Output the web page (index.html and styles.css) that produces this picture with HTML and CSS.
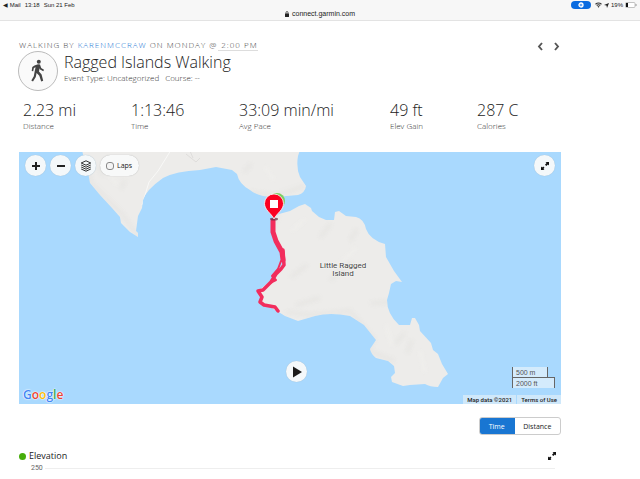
FILE: index.html
```html
<!DOCTYPE html>
<html lang="en">
<head>
<meta charset="utf-8">
<title>Ragged Islands Walking</title>
<link rel="stylesheet" href="styles.css">
</head>
<body>
<header class="browser">
  <div class="status">
    <div class="status-side"><span>◀ Mail</span><span>13:18</span><span>Sun 21 Feb</span></div>
    <div class="status-side">
      <span class="record"><svg width="6" height="6" viewBox="0 0 6 6"><circle cx="3" cy="3" r="2" fill="#64a5f5" stroke="#fff" stroke-width="1.3"/></svg></span>
      <svg class="wifi" width="7" height="6" viewBox="0 0 14 11"><path d="M1 4Q7-1 13 4M3.5 6.5Q7 3.5 10.5 6.5" fill="none" stroke="#333" stroke-width="2.2"/><path d="M5 8.3Q7 6.8 9 8.3L7 10.8Z" fill="#333"/></svg>
      <svg width="5" height="5" viewBox="0 0 10 10"><path d="M10 0 6 10 5 5 0 4Z" fill="#222"/></svg>
      <span>19%</span>
      <svg width="12" height="6" viewBox="0 0 12 6"><rect x=".5" y=".5" width="9.5" height="5" rx="1" fill="#fff" stroke="#aaa" stroke-width=".7"/><path d="M1 1h2v4H1Z" fill="#111"/><path d="M11 2v2" stroke="#999"/></svg>
    </div>
  </div>
  <div class="address">
    <svg width="4" height="6" viewBox="0 0 4 6"><path d="M1 3V1.5a1 1 0 0 1 2 0V3" fill="none" stroke="#222" stroke-width=".7"/><rect y="2.5" width="4" height="3.5" rx=".5" fill="#222"/></svg>
    <span>connect.garmin.com</span>
  </div>
</header>

<main class="page">
  <section class="heading">
    <div class="byline">WALKING BY <a href="#">KARENMCCRAW</a> ON MONDAY @<a class="when" href="#">2:00 PM</a></div>
    <nav class="pager">
      <button type="button" aria-label="Previous"><svg width="7" height="9" viewBox="0 0 7 9"><path d="M5 1 2 4.5 5 8" fill="none" stroke="#555" stroke-width="1.9"/></svg></button>
      <button type="button" aria-label="Next"><svg width="7" height="9" viewBox="0 0 7 9"><path d="M2 1 5 4.500 2 8" fill="none" stroke="#555" stroke-width="1.9"/></svg></button>
    </nav>
  </section>

  <section class="activity">
    <div class="badge">
      <svg width="16" height="24" viewBox="0 0 16 24"><circle cx="8.800" cy="2.700" r="2" fill="#444"/><path d="M4.500 6.500 8 5.200 10 5.500 11.200 9 14 10.800 13.300 12.200 10.100 10.500 9.600 9.300 9 12.500 11.600 15.500 13.200 21.700 11.200 22.500 9.300 16.800 6.600 14 5.800 18 3 22.500 1.300 21.400 3.800 17.300 4.700 12.200 5.600 8.200 3.900 9 3.200 12.200 1.700 12 2.300 8Z" fill="#444"/></svg>
    </div>
    <div>
      <h1>Ragged Islands Walking</h1>
      <p class="meta"><span>Event Type: Uncategorized</span><span>Course: --</span></p>
    </div>
  </section>

  <dl class="stats">
    <div><dd>2.23 mi</dd><dt>Distance</dt></div>
    <div><dd>1:13:46</dd><dt>Time</dt></div>
    <div><dd>33:09 min/mi</dd><dt>Avg Pace</dt></div>
    <div><dd>49 ft</dd><dt>Elev Gain</dt></div>
    <div><dd>287 C</dd><dt>Calories</dt></div>
  </dl>

  <section class="map">
    <svg class="terrain" viewBox="19 152 542 252" preserveAspectRatio="xMidYMid slice" aria-hidden="true">
      <defs>
        <filter id="soft" x="-20%" y="-20%" width="140%" height="140%"><feGaussianBlur stdDeviation="2"/></filter>
        <clipPath id="land"><path d="M82 150 85 163 88 172 90 183 100 195 112 208 120 217 121 223 130 232 138 237 138 233 136 231 138 216 142 208 143 200Q146 190 163 178 176 171 200 170L216 167 232 170 237 174Q239 184 250 190 258 197 275 197L298 195Q305 193 306 186L300 177Q296 168 298 156L300 150Z"/><path d="M273 219 279 214 290 211 299 206 305 204 311 208 312 211 319 217 326 220 334 220 335 212 339 211 346 216 356 217Q364 219 366 229 370 240 385 244L386 257 394 271 402 282 396 281 391 284 389 293 387 300Q387 314 399 325L410 325 412 318 415 318 419 325 420 331 431 343 433 350 438 354 442 364 448 374 443 378 438 387Q430 387 425 384L410 385 403 386 392 382 391 377 395 373 394 366 388 361 376 358Q371 354 370 349L376 340 364 325 350 316Q330 312 315 316L298 321 285 316 277 311 262 303 258 291 270 281 283 264 280 248 272 236Z"/></clipPath>
      </defs>
      <path fill="#a9d9fe" d="M0 100H640V450H0Z"/>
      <g clip-path="url(#land)">
        <path fill="#edecea" d="M0 100H640V450H0Z"/>
        <g filter="url(#soft)" fill="none" stroke="#d9d8d4" stroke-width="3" opacity=".35">
          <path d="M84 163 92 184 122 214 139 238M98 166 104 176M125 180 121 189M250 192 275 196 305 186M278 215 265 240M286 312 310 315 350 311 374 339 368 350 394 361M331 224 320 237M291 277 307 265M357 229 350 241M330 280 352 263M296 305 320 298M405 333 395 344M407 353 412 340M244 172 251 164M392 302 371 303"/>
          <path stroke="#f7f6f3" d="M102 162 117 185M265 166 274 181M291 231 306 219M357 248 339 264M386 324 392 346M420 350 425 373"/>
        </g>
        <path d="M171 150 158 171 149 182 142 205" fill="none" stroke="#f8f8f7"/>
        <path d="M186 154 196 162 200 158M190 151 193 158" fill="none" stroke="#dedddb"/>
      </g>
      <g fill="none" stroke="#f22d5d" stroke-linecap="round" stroke-linejoin="round">
        <path stroke-width="5" d="M273 221 273 232 276 241 282 252 283 260"/>
        <path stroke-width="3.500" d="M283 250 284 265 281 269 276 274 271 282 263 290 258 291 262 297 260 302 264 305 275 307 278 311"/>
        <path stroke-width="2" d="M281 261 278 269 272 276 276 280 270 283"/>
      </g>
      <circle cx="277" cy="201" r="8" fill="#7fcf62"/>
      <ellipse cx="274" cy="219" rx="4" ry="1.500" fill="#67283f" opacity=".7"/>
      <path d="M274 219C271 213 264.500 210 264.500 203.500a9.500 9.500 0 0 1 19 0C283.500 210 277 213 274 219Z" fill="#fb0021" stroke="#fff" stroke-width=".8"/>
      <path fill="#fff" d="M270 200h8v8h-8Z"/>
      <g class="place" text-anchor="middle"><text x="343" y="268">Little Ragged</text><text x="343" y="276">Island</text></g>
    </svg>
    <div class="tools">
      <button class="round" type="button" aria-label="Zoom in"><svg width="10" height="10" viewBox="0 0 10 10"><path d="M5 1v8M1 5h8" stroke="#222" stroke-width="2"/></svg></button>
      <button class="round" type="button" aria-label="Zoom out"><svg width="10" height="10" viewBox="0 0 10 10"><path d="M1 5h8" stroke="#222" stroke-width="2"/></svg></button>
      <button class="round" type="button" aria-label="Layers"><svg width="12" height="12" viewBox="0 0 12 12" fill="none" stroke="#333"><path d="M6 .8 10.800 3 6 5.200 1.200 3ZM1.200 5 6 7.200 10.800 5M1.200 7 6 9.200 10.800 7M1.200 9 6 11.200 10.800 9"/></svg></button>
      <label class="laps"><input type="checkbox">Laps</label>
    </div>
    <button class="round expand" type="button" aria-label="Full screen"><svg width="10" height="10" viewBox="0 0 10 10"><path d="M5.500 1H9v3.500L7.900 3.400 6.300 5 5 3.700 6.600 2.100ZM4.500 9H1V5.500L2.100 6.600 3.200 5.500 4.500 6.800 3.400 7.900Z" fill="#111"/></svg></button>
    <button class="round play" type="button" aria-label="Play"><svg width="12" height="12" viewBox="0 0 12 12"><path d="M2 .5 11 6 2 11.500Z" fill="#1b1b1b"/></svg></button>
    <div class="google"><span class="b">G</span><span class="r">o</span><span class="y">o</span><span class="b">g</span><span class="g">l</span><span class="r">e</span></div>
    <div class="scale"><span class="metric">500 m</span><span class="imperial">2000 ft</span></div>
    <div class="credits"><span>Map data ©2021</span><a href="#">Terms of Use</a></div>
  </section>

  <div class="switch">
    <button class="on" type="button">Time</button><button type="button">Distance</button>
  </div>

  <section class="chart">
    <header class="chart-head">
      <h2>Elevation</h2>
      <button type="button" aria-label="Expand chart"><svg width="10" height="10" viewBox="0 0 10 10"><path d="M5.500 1H9v3.500L7.900 3.400 6.300 5 5 3.700 6.600 2.100ZM4.500 9H1V5.500L2.100 6.600 3.200 5.500 4.500 6.800 3.400 7.900Z" fill="#111"/></svg></button>
    </header>
    <div class="axis"><span>250</span></div>
  </section>
</main>
</body>
</html>
```

FILE: styles.css
```css
* { box-sizing: border-box; }
body { margin: 0; background: #fff; color: #222; font-family: "Open Sans", sans-serif; overflow: hidden; }
h1, h2, p, dl, dd, dt { margin: 0; font-weight: 400; }
button { padding: 0; border: 0; background: none; font: inherit; color: inherit; }
a { color: inherit; text-decoration: none; }
svg { display: block; flex: none; }

.browser { height: 21px; background: #f7f7f7; border-bottom: 1px solid #e3e3e3; font: 6px/8px "Liberation Sans", sans-serif; }
.status { display: flex; justify-content: space-between; padding: 1px 3px 0; height: 9px; }
.status-side { display: flex; align-items: center; gap: 4px; }
.status-side + .status-side { gap: 2px; }
.record { display: flex; align-items: center; justify-content: center; width: 20px; height: 8px; border-radius: 4px; background: #0a6be0; margin-right: 2px; }
.address { display: flex; align-items: center; justify-content: center; gap: 3px; line-height: 9px; }
.address span { font-size: 7px; }

.page { padding: 18px 79px 0 19px; }
.heading { display: flex; justify-content: space-between; height: 12px; }
.byline { font-size: 8px; font-weight: 300; line-height: 11px; letter-spacing: 1px; color: #444; }
.byline a { color: #1f78d4; }
.byline .when { display: inline-block; height: 12px; margin-left: 1px; padding-left: 3px; color: #444; border-bottom: 1px solid #ddd; }
.pager { display: flex; gap: 9px; padding: 3px 1px 0 0; }

.activity { display: flex; gap: 6px; height: 41px; }
.badge { display: flex; align-items: center; justify-content: center; width: 40px; height: 40px; margin-left: -1px; border: 1px solid #bbb; border-radius: 50%; background: #fafafa; }
h1 { padding-top: 1px; font-size: 16px; line-height: 21px; font-weight: 300; }
.meta { display: flex; gap: 6px; font-size: 8px; font-weight: 300; line-height: 10px; color: #333; }

.stats { display: grid; grid-template-columns: 108fr 108fr 151fr 87fr 84fr; height: 50px; padding: 8px 0 0 4px; }
.stats div { display: flex; flex-direction: column; white-space: nowrap; }
.stats dd { font-size: 16px; line-height: 21px; font-weight: 300; }
.stats dt { font-size: 8px; line-height: 9px; font-weight: 300; color: #333; }

.map { position: relative; height: 252px; margin-top: 10px; background: #a9d9fe; }
.terrain { width: 100%; height: 100%; }
.place { font: 8px Roboto, sans-serif; fill: #444; stroke: #f5f5f3; stroke-width: 1px; paint-order: stroke; }
.tools { position: absolute; top: 3px; left: 6px; display: flex; gap: 4px; }
.round { display: flex; align-items: center; justify-content: center; width: 21px; height: 21px; border-radius: 50%; background: #f4f8fa; box-shadow: 0 0 1px #9bb5c6; }
.laps { display: flex; align-items: center; gap: 3px; height: 21px; padding: 0 7px 0 6px; border-radius: 11px; background: #f8f9f9; box-shadow: 0 0 1px #aaa; font-size: 7px; }
.laps input { appearance: none; width: 8px; height: 8px; margin: 0; border: 1px solid #888; border-radius: 3px; background: #f4f4f4; }
.expand { position: absolute; top: 3px; right: 6px; }
.play { position: absolute; left: 267px; bottom: 22px; }
.google { position: absolute; left: 4px; bottom: 1px; font: 600 12px/16px "Open Sans", sans-serif; text-shadow: 0 0 1px #fff, 0 0 1px #fff, 0 0 2px #fff; }
.b { color: #4285f4; }
.r { color: #ea4335; }
.y { color: #fbbc05; }
.g { color: #34a853; }
.scale { position: absolute; right: 6px; bottom: 16px; width: 43px; font: 7px/9px "Liberation Sans", sans-serif; color: #555; }
.scale span { display: block; height: 10px; padding: 1px 0 0 3px; background: #d4ebfc; border: solid #666; border-width: 0 1px; }
.scale .metric { width: 36px; }
.scale .imperial { border-top-width: 1px; height: 11px; }
.credits { position: absolute; right: 0; bottom: 0; display: flex; gap: 1px; font: 500 6px/9px Roboto, sans-serif; color: #222; }
.credits > * { padding: 0 4px; background: #cfe8fa; }

.switch { display: flex; width: 82px; height: 18px; margin: 13px 0 0 auto; border: 1px solid #ccc; border-radius: 3px; overflow: hidden; font-size: 7px; }
.switch button { flex: 46; }
.switch .on { flex: 36; margin: -1px 0 -1px -1px; background: #1976d2; color: #fff; }

.chart-head { display: flex; align-items: center; justify-content: space-between; height: 14px; margin-top: 14px; padding-right: 4px; }
.chart h2 { display: flex; align-items: center; gap: 3px; font-size: 9px; line-height: 14px; }
.chart h2::before { content: ""; width: 7px; height: 7px; border-radius: 50%; background: #46ad0a; }
.axis { display: flex; align-items: center; gap: 2px; height: 10px; padding: 0 6px 0 12px; font: 7px/10px Roboto, sans-serif; color: #666; }
.axis::after { content: ""; flex: 1; height: 1px; background: #eee; }
```
